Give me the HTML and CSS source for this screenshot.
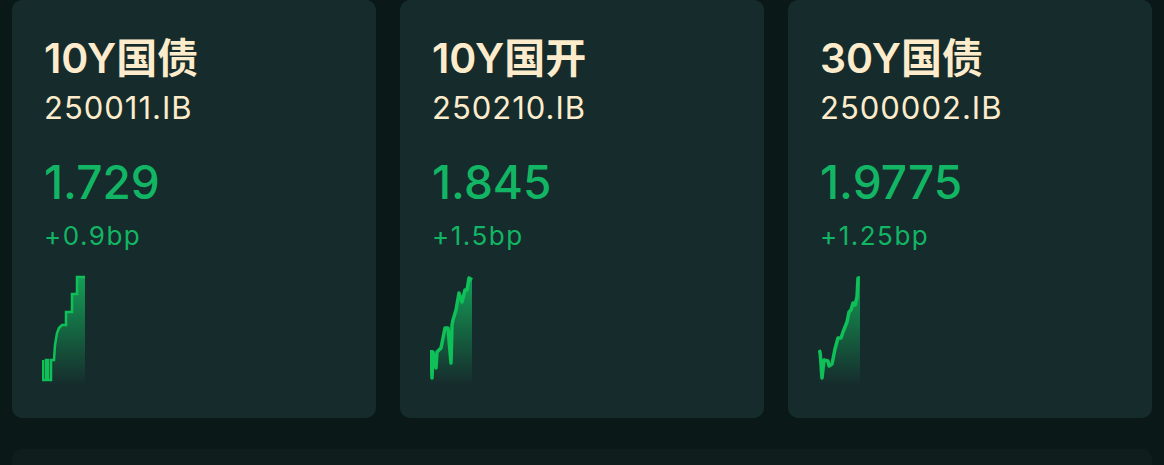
FILE: index.html
```html
<!DOCTYPE html>
<html lang="zh-CN">
<head>
    <meta charset="UTF-8">
    <meta name="viewport" content="width=device-width, initial-scale=1.0">
    <title>Bond Quotes</title>
    <link rel="stylesheet" href="styles.css">
</head>
<body>

    <div class="quote-grid">
        <div class="quote-card">
            <div class="bond-name">10Y国债</div>
            <div class="bond-code">250011.IB</div>
            <div class="bond-yield">1.729</div>
            <div class="bond-change">+0.9bp</div>
            <svg class="sparkline" width="48" height="112" viewBox="0 0 48 112">
                <defs>
                    <linearGradient id="fill1" x1="0" y1="0" x2="0" y2="1">
                        <stop offset="0" stop-color="#13b25d" stop-opacity="0.85"/>
                        <stop offset="1" stop-color="#13b25d" stop-opacity="0"/>
                    </linearGradient>
                </defs>
                <polygon fill="url(#fill1)" points="1,85 1,105 4,105 4,85 6,85 6,105 9,105 9,85 12,85 13,70 15,58 17,53 20,50 24,50 24,37 30,37 30,19 35,19 35,2 43,2 43,110 1,110"/>
                <polyline class="spark-line thin" points="1,85 1,105 4,105 4,85 6,85 6,105 9,105 9,85 12,85 13,70 15,58 17,53 20,50 24,50 24,37 30,37 30,19 35,19 35,2 43,2"/>
            </svg>
        </div>

        <div class="quote-card">
            <div class="bond-name">10Y国开</div>
            <div class="bond-code">250210.IB</div>
            <div class="bond-yield">1.845</div>
            <div class="bond-change">+1.5bp</div>
            <svg class="sparkline" width="48" height="112" viewBox="0 0 48 112">
                <defs>
                    <linearGradient id="fill2" x1="0" y1="0" x2="0" y2="1">
                        <stop offset="0" stop-color="#13b25d" stop-opacity="0.85"/>
                        <stop offset="1" stop-color="#13b25d" stop-opacity="0"/>
                    </linearGradient>
                </defs>
                <polygon fill="url(#fill2)" points="1,75 2,103 3,77 6,93 7,77 11,73 15,53 18,53 21,88 22,50 23,45 26,35 29,18 32,27 35,15 37,15 39,3 42,5 42,110 1,110"/>
                <polyline class="spark-line" points="1,75 2,103 3,77 6,93 7,77 11,73 15,53 18,53 21,88 22,50 23,45 26,35 29,18 32,27 35,15 37,15 39,3 42,5"/>
            </svg>
        </div>

        <div class="quote-card">
            <div class="bond-name">30Y国债</div>
            <div class="bond-code">2500002.IB</div>
            <div class="bond-yield">1.9775</div>
            <div class="bond-change">+1.25bp</div>
            <svg class="sparkline" width="48" height="112" viewBox="0 0 48 112">
                <defs>
                    <linearGradient id="fill3" x1="0" y1="0" x2="0" y2="1">
                        <stop offset="0" stop-color="#13b25d" stop-opacity="0.85"/>
                        <stop offset="1" stop-color="#13b25d" stop-opacity="0"/>
                    </linearGradient>
                </defs>
                <polygon fill="url(#fill3)" points="1,75 2,77 3,88 4,103 6,85 10,86 11,91 14,89 17,74 20,63 23,63 25,57 29,47 31,37 33,35 35,28 37,30 39,22 40,3 42,3 42,110 1,110"/>
                <polyline class="spark-line" points="1,75 2,77 3,88 4,103 6,85 10,86 11,91 14,89 17,74 20,63 23,63 25,57 29,47 31,37 33,35 35,28 37,30 39,22 40,3 42,3"/>
            </svg>
        </div>
    </div>

    <div class="detail-panel"></div>

</body>
</html>
```

FILE: styles.css
```css
html, body {
    height: 465px;
    overflow: hidden;
}
body {
    margin: 0;
    padding: 0 12px;
    background-color: #0a1918;
    font-family: Inter, "Noto Sans CJK SC", sans-serif;
    color: #fdeccb;
}
.quote-grid {
    display: grid;
    grid-template-columns: repeat(3, 1fr);
    gap: 24px;
}
.quote-card {
    background-color: #162b2c;
    border-radius: 10px;
    height: 418px;
    box-sizing: border-box;
    padding: 34px 32px 0;
    display: flex;
    flex-direction: column;
    align-items: flex-start;
}
.bond-name {
    font-size: 41px;
    font-weight: 600;
    line-height: 48px;
}
.bond-code {
    font-size: 31px;
    line-height: 40px;
    letter-spacing: 1px;
    margin-top: 6px;
}
.bond-yield {
    font-size: 46px;
    font-weight: 500;
    line-height: 56px;
    color: #12b564;
    margin-top: 26px;
}
.bond-change {
    font-size: 26px;
    line-height: 32px;
    letter-spacing: 1.5px;
    color: #12b564;
    margin-top: 10px;
}
.sparkline {
    display: block;
    margin-top: 23px;
    margin-left: -2px;
}
.spark-line {
    fill: none;
    stroke: #0fc058;
    stroke-width: 3.5;
    stroke-linejoin: round;
}
.spark-line.thin {
    stroke-width: 2.5;
    stroke-linejoin: miter;
}
.detail-panel {
    margin-top: 31px;
    height: 60px;
    background-color: #0f1e1d;
    border-radius: 10px;
}
```
